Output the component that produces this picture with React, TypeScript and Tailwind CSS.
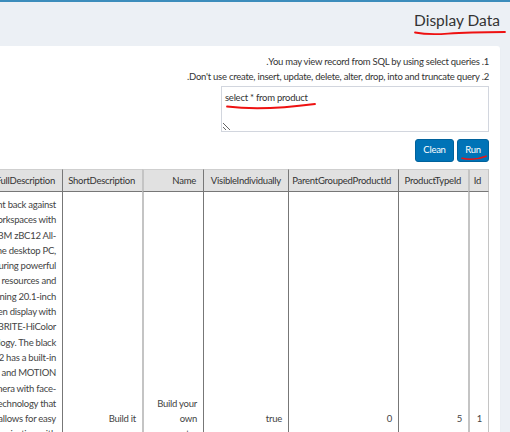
import React from "react";

const fullDesc = [
  "<p>Fight back against",
  "cluttered workspaces with",
  "the stylish IBM zBC12 All-",
  "in-One desktop PC,",
  "featuring powerful",
  "computing resources and",
  "a stunning 20.1-inch",
  "widescreen display with",
  "stunning XBRITE-HiColor",
  "LCD technology. The black",
  "IBM zBC12 has a built-in",
  "microphone and MOTION",
  "EYE camera with face-",
  "tracking technology that",
  "allows for easy",
  "communication with",
  "friends and family. And it",
  "has a built-in DVD burner",
  "and Sony's Movie Store",
  "software so you can",
  "create a digital",
  "entertainment library for",
  "personal viewing at your",
  "convenience. Easy to",
  "setup and even easier to",
  "use, this JS-series All-in-",
  "One includes an elegant",
  "transparent mouse and",
  "keyboard.</p>",
];

export default function App() {
  const th =
    "bg-[#e1e1e1] border-t border-t-[#cfcfcf] border-b border-b-[#777] py-[3px] px-[7px] text-right font-normal whitespace-nowrap leading-[15px] text-[#333]";
  const td = "bg-white align-middle text-right px-[6px] py-[5px] leading-[15.3px] text-[#444]";
  return (
    <div
      dir="rtl"
      className="relative h-[432px] w-full overflow-hidden bg-[#ecf0f5] font-['Lato',sans-serif] text-[#333]"
    >
      <div className="h-[2px] bg-[#3c8dbc]" />
      <div className="pt-[8px] pb-[16px] pr-[10px]">
        <h1 className="text-[15.5px] leading-[20px] text-[#333]">Display Data</h1>
      </div>
      <div className="mr-[10px] w-max rounded-[3px] bg-white px-[11px] pt-[8px] tracking-[-0.25px] shadow-[0_1px_1px_rgba(0,0,0,0.1)]">
        <div className="text-[9.5px] leading-[15px] text-[#333]">
          <p>1. You may view record from SQL by using select queries.</p>
          <p>2. Don't use create, insert, update, delete, alter, drop, into and truncate query.</p>
        </div>
        <textarea
          readOnly
          defaultValue="select * from product"
          className="mt-[2px] block h-[46px] w-[268px] border border-[#d2d6de] bg-white px-[3px] pt-[3px] text-left text-[9.5px] leading-[15px] tracking-[-0.25px] text-[#333] outline-none"
        />
        <div className="mt-[7px] flex gap-[3px]">
          <button className="h-[23px] w-[32px] rounded-[3px] border border-[#00629c] bg-[#0073b7] text-[9.5px] tracking-[-0.25px] text-white">
            Run
          </button>
          <button className="h-[23px] w-[39px] rounded-[3px] border border-[#00629c] bg-[#0073b7] text-[9.5px] tracking-[-0.25px] text-white">
            Clean
          </button>
        </div>
        <table className="mt-[7px] w-[597px] table-fixed border-separate border-spacing-0 text-[9.5px]">
          <colgroup>
            <col className="w-[21px]" />
            <col className="w-[70px]" />
            <col className="w-[110px]" />
            <col className="w-[85px]" />
            <col className="w-[61px]" />
            <col className="w-[80px]" />
            <col className="w-[170px]" />
          </colgroup>
          <thead>
            <tr>
              <th className={`${th} border-r border-r-[#c4c4c4] border-l-2 border-l-[#c4c4c4] px-[5px]`}>Id</th>
              <th className={`${th} border-l border-l-[#777]`}>ProductTypeId</th>
              <th className={`${th} border-l border-l-[#777] px-[5px]`}>ParentGroupedProductId</th>
              <th className={`${th} border-l border-l-[#777] px-[5px]`}>VisibleIndividually</th>
              <th className={`${th} border-l-2 border-l-[#c4c4c4]`}>Name</th>
              <th className={`${th} border-l border-l-[#777] px-[6px]`}>ShortDescription</th>
              <th className={`${th} border-l border-l-[#777] px-[6px]`}>FullDescription</th>
            </tr>
          </thead>
          <tbody>
            <tr>
              <td className={`${td} border-r border-r-[#c4c4c4] border-l-2 border-l-[#c4c4c4]`}>1</td>
              <td className={`${td} border-l border-l-[#777]`}>5</td>
              <td className={`${td} border-l border-l-[#777]`}>0</td>
              <td className={`${td} border-l border-l-[#777]`}>true</td>
              <td className={`${td} border-l-2 border-l-[#c4c4c4] px-[5px]`}>
                Build your
                <br />
                own
                <br />
                computer
              </td>
              <td className={`${td} border-l border-l-[#777]`}>Build it</td>
              <td className={`${td} border-l border-l-[#777]`}>
                <div dir="ltr" className="text-right">
                  {fullDesc.map((l, i) => (
                    <div key={i} className="whitespace-nowrap">
                      {l}
                    </div>
                  ))}
                </div>
              </td>
            </tr>
          </tbody>
        </table>
      </div>
      <svg
        className="pointer-events-none absolute left-0 top-0"
        width="510"
        height="432"
        viewBox="0 0 510 432"
      >
        <path d="M415 32.5 Q 428 35 448 33.6 T 505 32" fill="none" stroke="#ee1111" strokeWidth="1.8" strokeLinecap="round" />
        <path d="M227 106.5 Q 262 111 315 104" fill="none" stroke="#ee1111" strokeWidth="1.8" strokeLinecap="round" />
        <path d="M462 158.2 Q 474 161 486 156.2" fill="none" stroke="#ee1111" strokeWidth="1.6" strokeLinecap="round" />
      </svg>
    </div>
  );
}
